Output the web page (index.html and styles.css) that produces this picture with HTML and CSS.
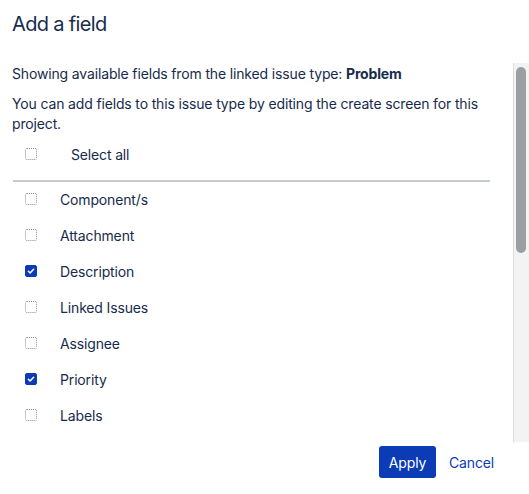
FILE: index.html
```html
<!DOCTYPE html>
<html>
<head>
<meta charset="utf-8">
<link rel="stylesheet" href="styles.css">
</head>
<body>
<div class="dialog">
  <header class="header"><h1 class="title">Add a field</h1></header>
  <div class="body">
    <div class="content">
      <p class="intro">Showing available fields from the linked issue type: <strong>Problem</strong></p>
      <p class="intro second">You can add fields to this issue type by editing the create screen for this project.</p>
      <label class="row select-all"><span class="cb"></span><span class="lbl">Select all</span></label>
      <hr class="sep">
      <ul class="list">
        <li class="row"><span class="cb"></span><span class="lbl">Component/s</span></li>
        <li class="row"><span class="cb"></span><span class="lbl">Attachment</span></li>
        <li class="row"><span class="cb checked"><svg viewBox="0 0 12 12" width="12" height="12"><path d="M3.4 6.3 L5.1 8 L8.6 4.3" fill="none" stroke="#fff" stroke-width="1.5" stroke-linecap="round" stroke-linejoin="round"/></svg></span><span class="lbl">Description</span></li>
        <li class="row"><span class="cb"></span><span class="lbl">Linked Issues</span></li>
        <li class="row"><span class="cb"></span><span class="lbl">Assignee</span></li>
        <li class="row"><span class="cb checked"><svg viewBox="0 0 12 12" width="12" height="12"><path d="M3.4 6.3 L5.1 8 L8.6 4.3" fill="none" stroke="#fff" stroke-width="1.5" stroke-linecap="round" stroke-linejoin="round"/></svg></span><span class="lbl">Priority</span></li>
        <li class="row"><span class="cb"></span><span class="lbl">Labels</span></li>
      </ul>
    </div>
    <div class="scrollbar"><div class="thumb"></div></div>
  </div>
  <footer class="footer">
    <button class="btn primary">Apply</button>
    <button class="btn link">Cancel</button>
  </footer>
</div>
</body>
</html>
```

FILE: styles.css
```css
html, body {
  margin: 0;
  padding: 0;
  background: #fff;
}
body {
  font-family: Inter, "Liberation Sans", Arial, sans-serif;
  color: #172b4d;
  font-size: 14px;
  line-height: 20px;
  letter-spacing: -0.15px;
}
.dialog {
  width: 529px;
  height: 494px;
  display: flex;
  flex-direction: column;
}
.header {
  padding: 12px 12px 0 12px;
  height: 64px;
  box-sizing: border-box;
  flex: none;
}
.title {
  margin: 0;
  font-size: 20px;
  line-height: 24px;
  font-weight: 400;
  letter-spacing: -0.65px;
}
.body {
  height: 377px;
  flex: none;
  display: flex;
}
.content {
  flex: 1;
  overflow: hidden;
  padding: 0 23px 0 12px;
}
.scrollbar {
  width: 15px;
  flex: none;
  margin-top: -1px;
  margin-bottom: -1px;
  background: #f3f3f3;
  border-left: 1px solid #dcdcdc;
}
.thumb {
  height: 186px;
  margin: 4px 3px 0 2px;
  background: #9b9ea3;
  border-radius: 5px;
}
.intro {
  margin: 0;
}
.second {
  margin-top: 10px;
}
.list {
  list-style: none;
  margin: 0;
  padding: 0;
}
.row {
  display: flex;
  align-items: center;
  height: 36px;
}
.select-all {
  margin-top: 4px;
  height: 34px;
}
.select-all .lbl {
  margin-left: 34px;
}
.cb {
  width: 10px;
  height: 10px;
  margin-left: 13px;
  border: 1px dotted #8f8f8f;
  border-radius: 2px;
  flex: none;
  position: relative;
  top: -1px;
}
.cb.checked {
  background: #0b3bb5;
  border: 1px solid #0b3bb5;
}
.cb.checked svg {
  position: absolute;
  left: -1px;
  top: -1px;
}
.lbl {
  margin-left: 23px;
}
.sep {
  margin: 8px 0 0 1px;
  border: 0;
  height: 2px;
  background: #c6cad1;
}
.footer {
  flex: 1;
  display: flex;
  justify-content: flex-end;
  align-items: flex-start;
  padding: 5px 27px 0 0;
  gap: 5px;
}
.btn {
  font-family: Inter, "Liberation Sans", Arial, sans-serif;
  font-size: 14px;
  letter-spacing: -0.15px;
  height: 32px;
  border: 0;
  border-radius: 3px;
  padding: 0 9px;
  cursor: pointer;
}
.primary {
  background: #0b3bb5;
  color: #fff;
  width: 57px;
}
.link {
  background: transparent;
  color: #0b3bb5;
  padding: 0 8px;
}
```
